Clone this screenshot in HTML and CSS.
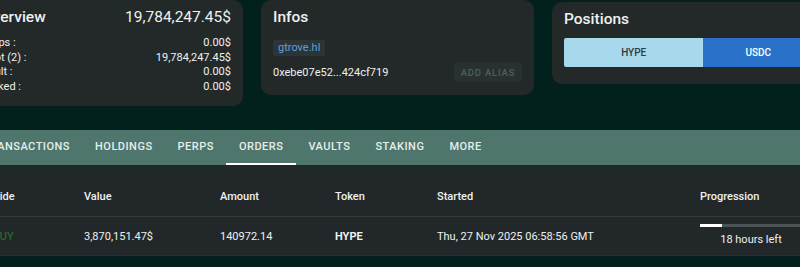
FILE: index.html
```html
<!DOCTYPE html>
<html lang="en">
<head>
  <meta charset="UTF-8" />
  <title>Wallet</title>
  <link rel="stylesheet" href="styles.css">
</head>
<body>
  <div class="page">
    <div class="cards">
      <div class="card overview">
        <div class="card-head">
          <span class="card-title">Overview</span>
          <span class="total">19,784,247.45$</span>
        </div>
        <div class="stat"><span>Perps :</span><span>0.00$</span></div>
        <div class="stat"><span>Spot (2) :</span><span>19,784,247.45$</span></div>
        <div class="stat"><span>Vault :</span><span>0.00$</span></div>
        <div class="stat"><span>Staked :</span><span>0.00$</span></div>
      </div>

      <div class="card infos">
        <div class="card-title">Infos</div>
        <span class="alias-chip">gtrove.hl</span>
        <div class="address-row">
          <span class="address">0xebe07e52...424cf719</span>
          <button class="alias-btn">ADD ALIAS</button>
        </div>
      </div>

      <div class="card positions">
        <div class="card-title">Positions</div>
        <div class="split-bar">
          <div class="seg seg-hype" style="width: 56%">HYPE</div>
          <div class="seg seg-usdc" style="width: 44%">USDC</div>
        </div>
      </div>
    </div>

    <div class="tabs">
      <div class="tab">TRANSACTIONS</div>
      <div class="tab">HOLDINGS</div>
      <div class="tab">PERPS</div>
      <div class="tab active">ORDERS</div>
      <div class="tab">VAULTS</div>
      <div class="tab">STAKING</div>
      <div class="tab">MORE</div>
    </div>

    <div class="orders">
      <div class="row head">
        <div>Side</div>
        <div>Value</div>
        <div>Amount</div>
        <div>Token</div>
        <div>Started</div>
        <div>Progression</div>
      </div>
      <div class="row">
        <div class="buy">BUY</div>
        <div>3,870,151.47$</div>
        <div>140972.14</div>
        <div class="token">HYPE</div>
        <div>Thu, 27 Nov 2025 06:58:56 GMT</div>
        <div class="progress">
          <div class="track"><div class="fill" style="width: 22%"></div></div>
          <div class="left">18 hours left</div>
        </div>
      </div>
    </div>
  </div>
</body>
</html>
```

FILE: styles.css
```css
:root {
  --bg: #03211c;
  --card: #232929;
  --tabs: #4e766d;
  --table: #22282a;
  --line: #323a3a;
  --text: #eef1f0;
}

body {
  margin: 0;
  background: var(--bg);
  color: var(--text);
  font-family: Roboto, "Liberation Sans", sans-serif;
  overflow: hidden;
}

.page {
  margin-left: -30px;
  width: 880px;
}

.cards {
  display: flex;
  align-items: flex-start;
  gap: 18px;
}

.card {
  width: 273px;
  box-sizing: border-box;
  background: var(--card);
  border-radius: 10px;
  padding: 5px 12px 12px;
}

.card-title {
  font-size: 15.5px;
  font-weight: 500;
  line-height: 24px;
}

.card-head {
  display: flex;
  justify-content: space-between;
  margin-bottom: 7px;
}

.total {
  font-size: 15.5px;
  line-height: 24px;
}

.stat {
  display: flex;
  justify-content: space-between;
  font-size: 11px;
  line-height: 14.6px;
}

.infos {
  padding-bottom: 13px;
}

.alias-chip {
  display: inline-block;
  margin-top: 11px;
  padding: 0 5px;
  line-height: 16px;
  font-size: 11px;
  color: #5e9fd8;
  background: #2b3537;
  border-radius: 3px;
}

.address-row {
  display: flex;
  justify-content: space-between;
  align-items: center;
  margin-top: 6px;
}

.address {
  font-size: 11px;
}

.alias-btn {
  font-family: inherit;
  font-size: 9.5px;
  font-weight: 500;
  letter-spacing: 0.8px;
  color: #4e615e;
  background: #283030;
  border: none;
  border-radius: 4px;
  width: 68px;
  height: 20px;
  padding: 0;
}

.positions {
  margin-top: 2px;
  padding-bottom: 17px;
}

.split-bar {
  display: flex;
  margin-top: 7px;
  height: 29px;
  border-radius: 2px;
  overflow: hidden;
}

.seg {
  display: flex;
  align-items: center;
  justify-content: center;
  font-size: 10px;
  font-weight: 500;
}

.seg-hype {
  background: #a8d8ec;
  color: #2b3c44;
}

.seg-usdc {
  background: #2a72c9;
  color: #fff;
}

.tabs {
  display: flex;
  margin-top: 24px;
  height: 35px;
  background: var(--tabs);
}

.tab {
  display: flex;
  align-items: center;
  padding: 0 12.5px;
  font-size: 11px;
  font-weight: 500;
  letter-spacing: 0.5px;
  color: #e6eeec;
  border-bottom: 2px solid transparent;
  box-sizing: border-box;
}

.tab.active {
  border-bottom-color: #fff;
}

.orders {
  background: var(--table);
}

.row {
  display: grid;
  grid-template-columns: 91px 136px 115px 102px 263px 102px;
  align-items: center;
  font-size: 11px;
  height: 38px;
  padding-left: 23px;
  border-bottom: 1px solid #283030;
}

.row.head {
  height: 52px;
  padding-top: 12px;
  box-sizing: border-box;
  font-weight: 500;
  border-bottom: 1px solid var(--line);
}

.buy {
  color: #26752d;
}

.token {
  font-weight: 700;
}

.progress {
  display: flex;
  flex-direction: column;
  align-items: center;
  gap: 6px;
  padding-bottom: 2px;
}

.track {
  width: 100%;
  height: 3px;
  background: #4a5253;
}

.fill {
  height: 100%;
  background: #fff;
}

.left {
  font-size: 11px;
}
```
